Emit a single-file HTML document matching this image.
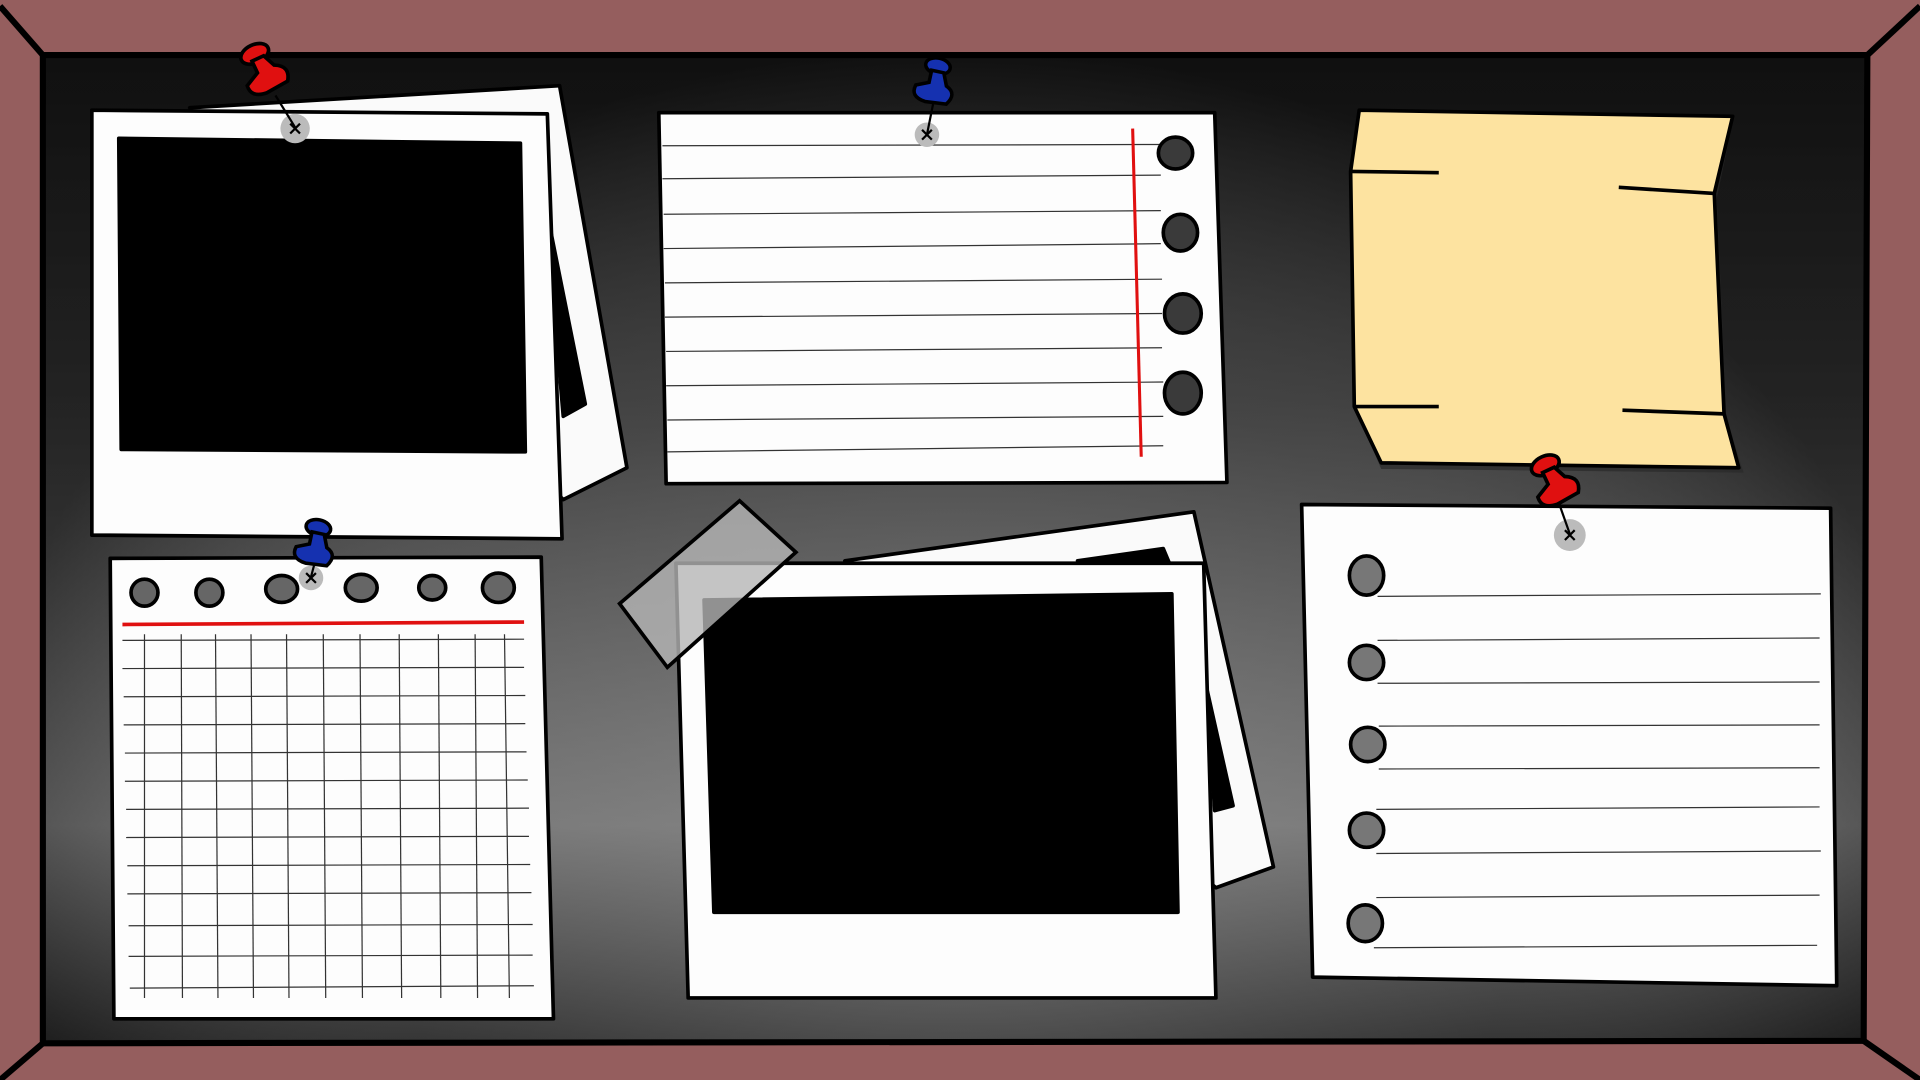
<!DOCTYPE html>
<html><head><meta charset="utf-8"><style>html,body{margin:0;padding:0;width:1920px;height:1080px;overflow:hidden;background:#955e5e}svg{display:block}</style></head>
<body>
<svg width="1920" height="1080" viewBox="0 0 1568 882" preserveAspectRatio="none" xmlns="http://www.w3.org/2000/svg">
<defs>
<linearGradient id="lin" x1="0" y1="0" x2="0" y2="1"><stop offset="0" stop-color="#1a1a1a"/><stop offset="0.35" stop-color="#3a3a3a"/><stop offset="0.78" stop-color="#7a7a7a"/><stop offset="1" stop-color="#2a2a2a"/></linearGradient>
<radialGradient id="bg" cx="780" cy="680" r="800" gradientUnits="userSpaceOnUse" gradientTransform="translate(780 680) scale(1 0.8) translate(-780 -680)">
<stop offset="0" stop-color="#999" stop-opacity="0.5"/><stop offset="0.6" stop-color="#777" stop-opacity="0.15"/><stop offset="1" stop-color="#000" stop-opacity="0.4"/></radialGradient>
<g id="redpin" transform="scale(1.5)"><g transform="rotate(-25)"><ellipse cx="0" cy="0" rx="8" ry="5" fill="#e01010" stroke="#000" stroke-width="2"/><path d="M-3 3 L-3 10 L-11 14 Q-12 21 -3 22 L10 21 Q15 14 7 10 L4 3Z" fill="#e01010" stroke="#000" stroke-width="2"/></g></g>
<g id="bluepin" transform="scale(1.45)"><g transform="rotate(12)"><ellipse cx="0" cy="0" rx="7" ry="4.5" fill="#1531b0" stroke="#000" stroke-width="2"/><path d="M-3 3 L-3 10 L-10 13 Q-12 20 -3 21 L9 20 Q14 13 7 10 L4 3Z" fill="#1531b0" stroke="#000" stroke-width="2"/></g></g>
</defs>
<rect width="1568" height="882" fill="#955e5e"/>
<polygon points="35,45 1525,45 1522,850 35,852" fill="url(#lin)"/>
<polygon points="35,45 1525,45 1522,850 35,852" fill="url(#bg)" stroke="#000" stroke-width="5"/>
<g stroke="#000" stroke-width="5"><line x1="0" y1="5" x2="35" y2="45"/><line x1="1568" y1="5" x2="1525" y2="45"/><line x1="0" y1="882" x2="35" y2="852"/><line x1="1568" y1="882" x2="1522" y2="850"/></g>
<g stroke="#000" stroke-width="3" stroke-linejoin="round">
<polygon points="155,88 457,70 512,382 460,408" fill="#fafafa"/>
<polygon points="445,165 478,330 460,340" fill="#000"/>
<polygon points="75,90 447,93 459,440 75,437" fill="#fdfdfd"/>
<polygon points="97,113 425,117 429,369 99,367" fill="#000"/>
<polygon points="538,92 992,92 1002,394 544,395" fill="#fdfdfd"/>
<polygon points="1110,95 1415,100 1402,162 1410,342 1424,386 1128,383 1108,336 1105,146" fill="#2a2a2a" stroke="none" opacity="0.7"/>
<polygon points="1110,90 1415,95 1400,158 1408,338 1420,382 1128,378 1106,332 1103,140" fill="#fde3a0"/>
<polygon points="90,456 442,455 452,832 93,832" fill="#fdfdfd"/>
<polygon points="690,458 975,418 1040,708 993,725" fill="#fafafa"/>
<polygon points="985,560 1007,658 992,662" fill="#000"/>
<polygon points="880,458 950,448 955,460" fill="#000"/>
<polygon points="552,460 983,460 993,815 562,815" fill="#fdfdfd"/>
<polygon points="575,490 957,485 962,745 583,745" fill="#000"/>
<polygon points="1063,412 1495,415 1500,805 1072,798" fill="#fdfdfd"/>
</g>
<g stroke="#000" stroke-width="3"><path d="M1103 140 L1175 141"/><path d="M1400 158 L1322 153"/><path d="M1106 332 L1175 332"/><path d="M1408 338 L1325 335"/></g>
<polygon points="506,493 604,409 650,451 545,545" fill="#b5b5b5" fill-opacity="0.8" stroke="#000" stroke-width="3"/>
<g stroke="#333" stroke-width="1">
<line x1="541" y1="119" x2="948" y2="118"/><line x1="541" y1="146" x2="948" y2="143"/><line x1="542" y1="175" x2="948" y2="172"/><line x1="542" y1="203" x2="948" y2="199"/><line x1="543" y1="231" x2="949" y2="228"/><line x1="543" y1="259" x2="949" y2="256"/><line x1="544" y1="287" x2="949" y2="284"/><line x1="544" y1="315" x2="950" y2="312"/><line x1="545" y1="343" x2="950" y2="340"/><line x1="545" y1="369" x2="950" y2="364"/>
</g>
<line x1="925" y1="105" x2="932" y2="373" stroke="#e01010" stroke-width="2.5"/>
<g fill="#3a3a3a" stroke="#000" stroke-width="3"><ellipse cx="960" cy="125" rx="14" ry="13"/><ellipse cx="964" cy="190" rx="14" ry="15"/><ellipse cx="966" cy="256" rx="15" ry="16"/><ellipse cx="966" cy="321" rx="15" ry="17"/></g>
<g stroke="#333" stroke-width="1">
<line x1="118" y1="518" x2="118" y2="815"/><line x1="148" y1="518" x2="149" y2="815"/><line x1="176" y1="518" x2="178" y2="815"/><line x1="205" y1="518" x2="207" y2="815"/><line x1="234" y1="518" x2="236" y2="815"/><line x1="264" y1="518" x2="266" y2="815"/><line x1="294" y1="518" x2="296" y2="815"/><line x1="326" y1="518" x2="328" y2="815"/><line x1="358" y1="518" x2="360" y2="815"/><line x1="388" y1="518" x2="390" y2="815"/><line x1="412" y1="518" x2="416" y2="815"/>
<line x1="100" y1="523" x2="428" y2="522"/><line x1="100" y1="546" x2="428" y2="545"/><line x1="101" y1="569" x2="429" y2="568"/><line x1="101" y1="592" x2="429" y2="591"/><line x1="102" y1="615" x2="430" y2="614"/><line x1="102" y1="638" x2="431" y2="637"/><line x1="103" y1="661" x2="432" y2="660"/><line x1="103" y1="684" x2="432" y2="683"/><line x1="104" y1="707" x2="433" y2="706"/><line x1="104" y1="730" x2="434" y2="729"/><line x1="105" y1="756" x2="435" y2="755"/><line x1="105" y1="781" x2="435" y2="780"/><line x1="106" y1="807" x2="436" y2="805"/>
</g>
<line x1="100" y1="510" x2="428" y2="508" stroke="#e01010" stroke-width="3"/>
<g fill="#666" stroke="#000" stroke-width="3"><ellipse cx="118" cy="484" rx="11" ry="11"/><ellipse cx="171" cy="484" rx="11" ry="11"/><ellipse cx="230" cy="481" rx="13" ry="11"/><ellipse cx="295" cy="480" rx="13" ry="11"/><ellipse cx="353" cy="480" rx="11" ry="10"/><ellipse cx="407" cy="480" rx="13" ry="12"/></g>
<g stroke="#333" stroke-width="1">
<line x1="1125" y1="487" x2="1487" y2="485"/><line x1="1125" y1="523" x2="1486" y2="521"/><line x1="1125" y1="558" x2="1486" y2="557"/><line x1="1126" y1="593" x2="1486" y2="592"/><line x1="1126" y1="628" x2="1486" y2="627"/><line x1="1124" y1="661" x2="1486" y2="659"/><line x1="1124" y1="697" x2="1487" y2="695"/><line x1="1124" y1="733" x2="1486" y2="731"/><line x1="1122" y1="774" x2="1484" y2="772"/>
</g>
<g fill="#777" stroke="#000" stroke-width="3"><ellipse cx="1116" cy="470" rx="14" ry="16"/><ellipse cx="1116" cy="541" rx="14" ry="14"/><ellipse cx="1117" cy="608" rx="14" ry="14"/><ellipse cx="1116" cy="678" rx="14" ry="14"/><ellipse cx="1115" cy="754" rx="14" ry="15"/></g>
<g fill="#bbb"><circle cx="241" cy="105" r="12"/><circle cx="757" cy="110" r="10"/><circle cx="254" cy="472" r="10"/><circle cx="1282" cy="437" r="13"/></g>
<g stroke="#000" stroke-width="1.8"><path d="M237 101l8 8M245 101l-8 8"/><path d="M753 106l8 8M761 106l-8 8"/><path d="M250 468l8 8M258 468l-8 8"/><path d="M1278 433l8 8M1286 433l-8 8"/>
<path d="M225 78 L241 104"/><path d="M762 85 L757 110"/><path d="M258 456 L254 471"/><path d="M1270 402 L1282 436"/></g>
<use href="#redpin" x="208" y="44"/>
<use href="#bluepin" x="766" y="54"/>
<use href="#bluepin" x="260" y="431"/>
<use href="#redpin" x="1262" y="380"/>
</svg>
</body></html>
